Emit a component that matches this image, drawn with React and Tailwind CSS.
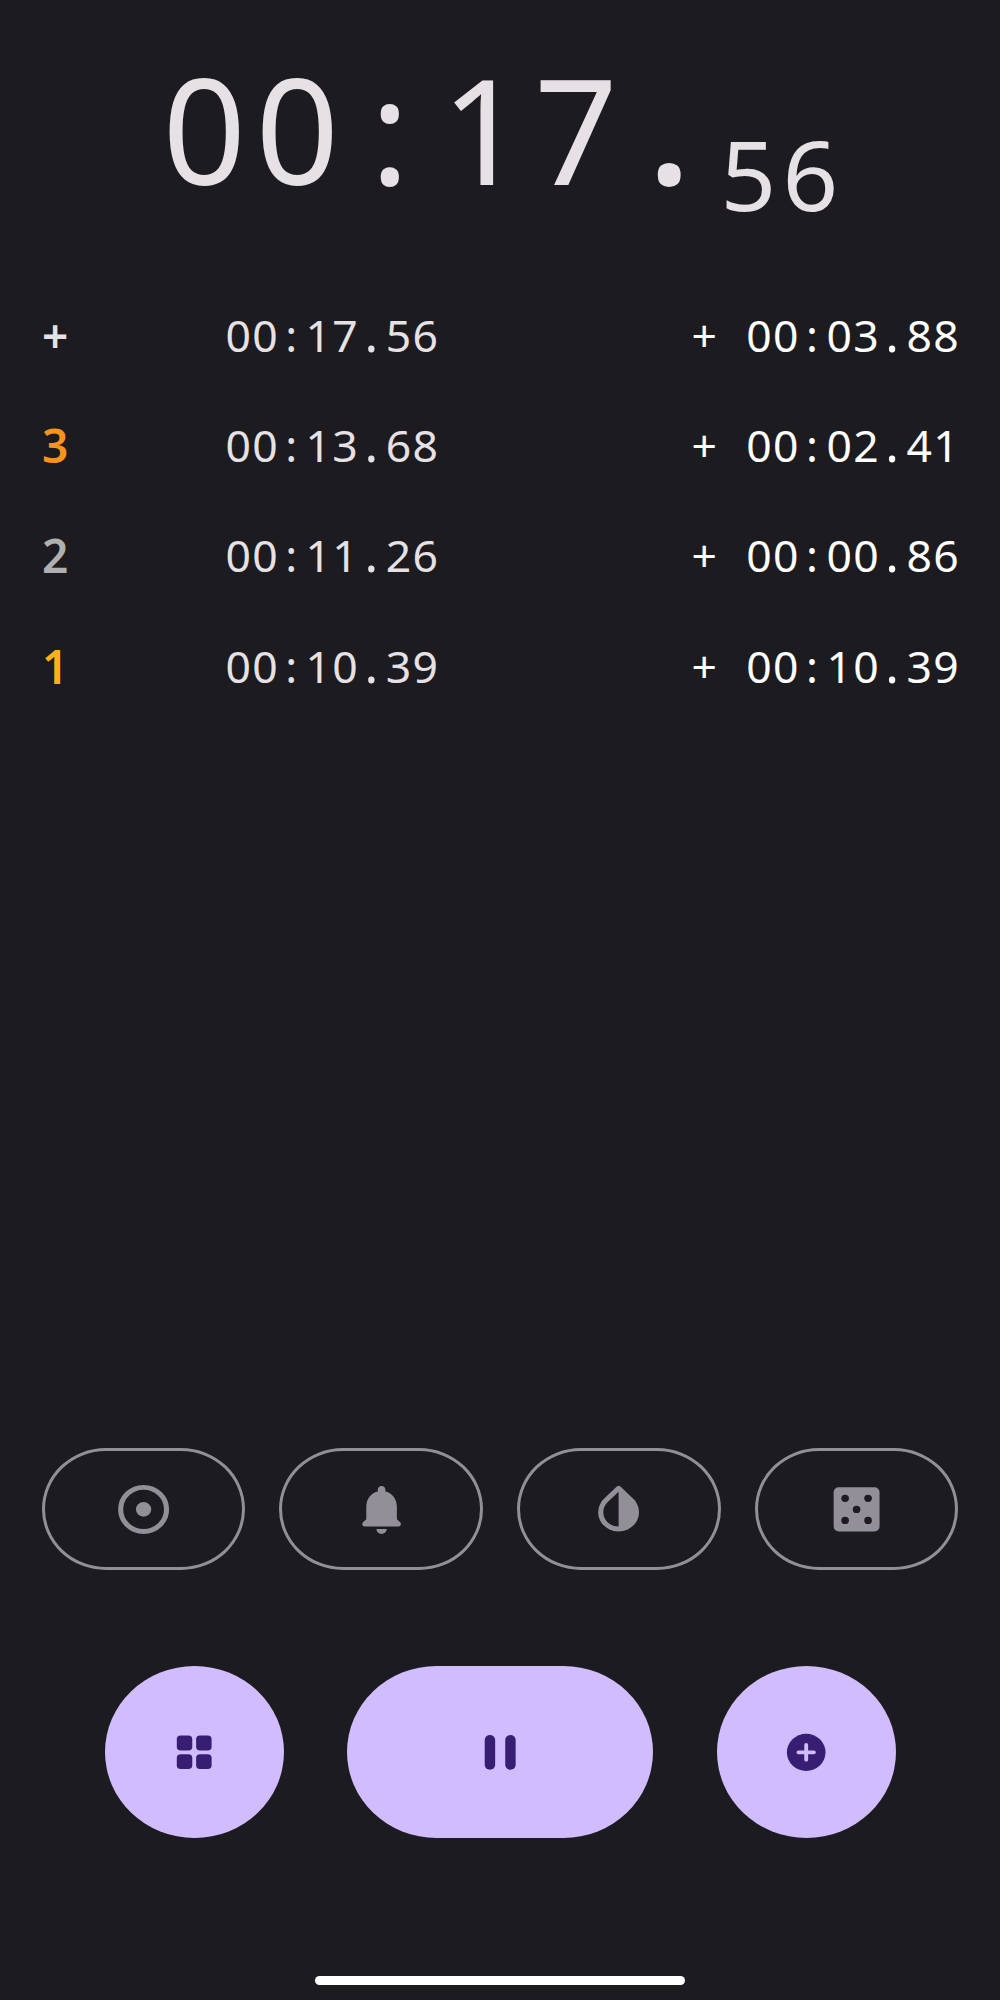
const laps = [
  { label: '+', tone: 'text-[#e6e1e5]', total: ['00', '17', '56'], diff: ['00', '03', '88'] },
  { label: '3', tone: 'text-[#f7941d]', total: ['00', '13', '68'], diff: ['00', '02', '41'] },
  { label: '2', tone: 'text-[#b0b0b0]', total: ['00', '11', '26'], diff: ['00', '00', '86'] },
  { label: '1', tone: 'text-[#fcb215]', total: ['00', '10', '39'], diff: ['00', '10', '39'] },
];

/* Separators take up one full digit cell, like in a monospaced face. */
function LapTime({ parts }) {
  const [m, s, c] = parts;
  return (
    <>
      {m}
      <span className="inline-block w-[26.6px] pr-[2px] text-center tracking-normal">:</span>
      {s}
      <span className="inline-block w-[26.6px] pr-[2px] text-center text-[51px] leading-none tracking-normal">.</span>
      {c}
    </>
  );
}

function Icon({ className, children }) {
  return (
    <svg viewBox="0 0 24 24" preserveAspectRatio="none" fill="currentColor" className={className}>
      {children}
    </svg>
  );
}

function Tool({ label, children }) {
  return (
    <button
      aria-label={label}
      className="flex h-[122px] w-[203.5px] items-center justify-center rounded-[64px/61px] border-[3px] border-[#938f99] text-[#938f99]"
    >
      <Icon className="h-[58.8px] w-[61.2px]">{children}</Icon>
    </button>
  );
}

function Action({ label, wide, children }) {
  return (
    <button
      aria-label={label}
      className={`flex h-[172px] items-center justify-center rounded-[89.5px/86px] bg-[#d0bcff] text-[#381e72] ${wide ? 'w-[305.5px]' : 'w-[179px]'}`}
    >
      <Icon className="h-[44.6px] w-[46.4px]">{children}</Icon>
    </button>
  );
}

export default function App() {
  return (
    <main className="flex h-[2000px] w-[1000px] flex-col bg-[#1c1b1f] font-['Noto_Sans',sans-serif] text-[#e6e1e5]">
      <header className="flex h-[279.5px] items-start whitespace-nowrap pl-[162.5px] pt-[29px]">
        <div className="w-[543px] text-[146px] leading-[200px] tracking-[9.4px]">
          00
          <span className="inline-block w-[93px] pr-[10px] text-center tracking-normal">:</span>
          17
          <span className="inline-block w-[93px] pr-[9px] text-center text-[165px] font-medium leading-none tracking-normal">.</span>
        </div>
        <div className="ml-[15px] pt-[78px] text-[97.5px] leading-[134px] tracking-[6.2px]">56</div>
      </header>

      <section className="flex flex-col px-[42px]">
        {laps.map((lap) => (
          <div key={lap.label} className="flex h-[110.4px] items-center text-[44.5px] leading-[60px]">
            <span className={`w-[183.5px] text-[46px] font-semibold ${lap.tone}`}>{lap.label}</span>
            <span className="tracking-[1.3px]"><LapTime parts={lap.total} /></span>
            <span className="-mr-[2px] ml-auto tracking-[1.3px] text-white">
              <span className="mr-[28px]">+</span>
              <LapTime parts={lap.diff} />
            </span>
          </div>
        ))}
      </section>

      <footer className="mt-auto flex flex-col items-center pb-[15px]">
        <div className="flex w-[916.5px] justify-between">
          <Tool label="Record">
            <circle cx="12" cy="12" r="9" fill="none" stroke="currentColor" strokeWidth="2" />
            <circle cx="12" cy="12" r="3" />
          </Tool>
          <Tool label="Alerts">
            <path d="M12 22c1.1 0 2-.9 2-2h-4c0 1.1.89 2 2 2zm6-6v-5c0-3.07-1.64-5.64-4.5-6.32V4c0-.83-.67-1.5-1.5-1.5s-1.5.67-1.5 1.5v.68C7.63 5.36 6 7.92 6 11v5l-1.29 1.29c-.63.63-.19 1.71.7 1.71h13.17c.89 0 1.34-1.08.71-1.71L18 16z" />
          </Tool>
          <Tool label="Colors">
            <path d="M12 4.81V19c-3.31 0-6-2.63-6-5.87 0-1.56.62-3.03 1.75-4.14L12 4.81M6.35 7.56C4.9 8.99 4 10.96 4 13.13 4 17.48 7.58 21 12 21s8-3.52 8-7.87c0-2.17-.9-4.14-2.35-5.57L12.7 2.69a.99.99 0 0 0-1.4 0L6.35 7.56z" />
          </Tool>
          <Tool label="Random">
            <rect x="3" y="3" width="18" height="18" rx="2" />
            <g fill="#1c1b1f">
              <circle cx="7.5" cy="7.5" r="1.5" />
              <circle cx="16.5" cy="7.5" r="1.5" />
              <circle cx="12" cy="12" r="1.5" />
              <circle cx="7.5" cy="16.5" r="1.5" />
              <circle cx="16.5" cy="16.5" r="1.5" />
            </g>
          </Tool>
        </div>

        <div className="mt-[96px] flex w-[791px] justify-between">
          <Action label="Menu">
            <rect x="3" y="3" width="8" height="8" rx="2" />
            <rect x="13" y="3" width="8" height="8" rx="2" />
            <rect x="3" y="13" width="8" height="8" rx="2" />
            <rect x="13" y="13" width="8" height="8" rx="2" />
          </Action>
          <Action label="Pause" wide>
            <rect x="4" y="2.7" width="5.4" height="18.7" rx="2.7" />
            <rect x="14.6" y="2.7" width="5.4" height="18.7" rx="2.7" />
          </Action>
          <Action label="Lap">
            <circle cx="12" cy="12" r="10" />
            <path d="M12 8v8M8 12h8" stroke="#d0bcff" strokeWidth="2" strokeLinecap="round" />
          </Action>
        </div>

        <div className="mt-[138px] h-[9px] w-[370px] rounded-full bg-white" />
      </footer>
    </main>
  );
}
